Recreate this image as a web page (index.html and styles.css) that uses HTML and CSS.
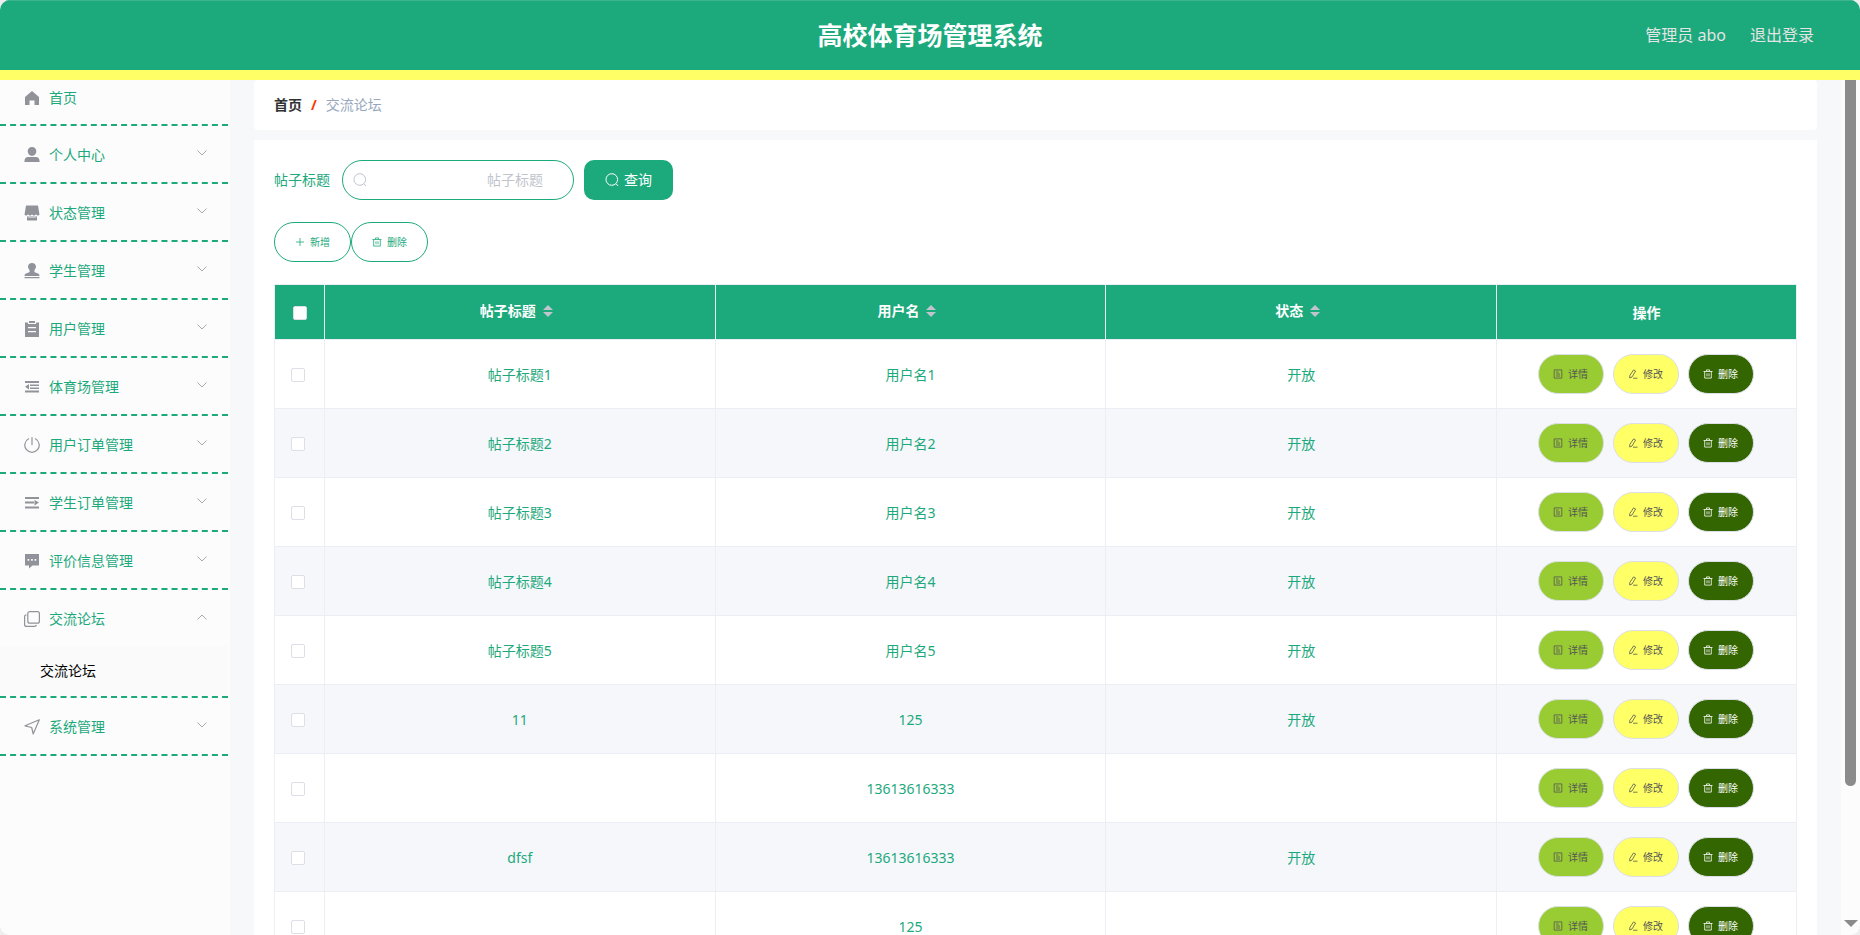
FILE: index.html
```html
<!DOCTYPE html>
<html lang="zh-CN">
<head>
<meta charset="utf-8">
<title>高校体育场管理系统</title>
<link rel="stylesheet" href="styles.css">
</head>
<body>
<svg class="sprite" aria-hidden="true">
  <symbol id="i-home" viewBox="0 0 16 16"><path fill="currentColor" d="M8 1 15 7v8h-4.500v-4.500h-5V15H1V7z"/></symbol>
  <symbol id="i-user" viewBox="0 0 16 16"><path fill="currentColor" d="M8 0c2.600 0 4.300 1.800 4.300 4.300S10.600 9 8 9 3.700 6.800 3.700 4.300 5.400 0 8 0zM4 10h8c2 0 3.500 1.600 3.500 3.500V15H.5v-1.500C.5 11.600 2 10 4 10z"/></symbol>
  <symbol id="i-shop" viewBox="0 0 16 16"><path fill="currentColor" d="M2 .5h12l1.500 9-1.500 1.300-2-1.300-2 1.300-2-1.300-2 1.300-2-1.300-2 1.300L.5 9.500zM3 11.500h1.500V13h7v-1.500H13V15.500H3z"/><path fill="currentColor" opacity=".5" d="M4.500 11h7v2h-7z"/></symbol>
  <symbol id="i-stamp" viewBox="0 0 16 16"><path fill="currentColor" d="M8 0c2.300 0 4 1.700 4 3.800 0 1.700-1.700 2.700-1.700 4.200 0 1 .7 1.500 1.700 1.800 2 .5 3.500 1 3.500 3.200H.5C.5 10.800 2 10.300 4 9.800c1-.3 1.700-.8 1.700-1.800C5.700 6.500 4 5.500 4 3.800 4 1.700 5.700 0 8 0zM.5 14h15v1.300H.5z"/></symbol>
  <symbol id="i-claim" viewBox="0 0 16 16"><path fill="currentColor" fill-rule="evenodd" d="M1 1.500h3V3h8V1.500h3V16H1zM4 6v1.300h8V6zM4 10v1.300h8V10zM5 0h6v2H5z"/></symbol>
  <symbol id="i-fold" viewBox="0 0 16 16"><path fill="currentColor" d="M1 2h14v2H1zM6 5.500h9v1.500H6zM6 8.500h9V10H6zM1 11.500h14v2H1zM1 7.700 5 5v5.500z"/></symbol>
  <symbol id="i-power" viewBox="0 0 16 16"><path fill="none" stroke="currentColor" stroke-width="1.200" stroke-linecap="round" d="M8 .6v7M4.600 1.800a7.200 7.200 0 1 0 6.800 0"/></symbol>
  <symbol id="i-unfold" viewBox="0 0 16 16"><path fill="currentColor" d="M1 2h14v2H1zM1 6.500h9v2H1zM1 11.500h14v2H1zM15 7.500 10.500 5v5.500z"/></symbol>
  <symbol id="i-comment" viewBox="0 0 16 16"><path fill="currentColor" fill-rule="evenodd" d="M1 1h14v11.500H8.500L5 15.500v-3H1zM3.600 6v1.700h1.700V6zM7.100 6v1.700h1.700V6zM10.600 6v1.700h1.700V6z"/></symbol>
  <symbol id="i-copy" viewBox="0 0 16 16"><g fill="none" stroke="currentColor" stroke-width="1.200"><rect x="3.800" y=".6" width="11.600" height="11.600" rx="2"/><path d="M2.500 3.800C1.300 3.800.6 4.500.6 5.800v7.600c0 1.300.8 2 2 2h7.800c1.200 0 1.900-.5 2-1.500"/></g></symbol>
  <symbol id="i-send" viewBox="0 0 16 16"><path fill="none" stroke="currentColor" stroke-width="1.200" stroke-linejoin="round" d="M15.300.8 1 6.800l6.700 1.700L9.200 15z"/></symbol>
  <symbol id="i-down" viewBox="0 0 12 12"><path fill="none" stroke="currentColor" d="M1.500 3.500 6 8l4.500-4.500"/></symbol>
  <symbol id="i-up" viewBox="0 0 12 12"><path fill="none" stroke="currentColor" d="M1.500 8.500 6 4l4.500 4.500"/></symbol>
  <symbol id="i-search" viewBox="0 0 14 14"><g fill="none" stroke="currentColor"><circle cx="6.800" cy="6.500" r="5.800"/><path d="m11 10.800 2.200 2.200"/></g></symbol>
  <symbol id="i-plus" viewBox="0 0 10 10"><path fill="none" stroke="currentColor" stroke-width=".8" d="M5 1v8M1 5h8"/></symbol>
  <symbol id="i-trash" viewBox="0 0 10 10"><path fill="none" stroke="currentColor" stroke-width=".8" d="M.5 2.500h9M3.500 2.200V.9h3v1.300M1.700 2.500v6.600h6.600V2.500M4 4.300v3M6 4.300v3"/></symbol>
  <symbol id="i-doc" viewBox="0 0 10 10"><path fill="none" stroke="currentColor" stroke-width=".8" d="M1.200.9h7.600v8.200H1.200zM3 3h2.500M3 5h4M3 7h4"/></symbol>
  <symbol id="i-edit" viewBox="0 0 10 10"><path fill="none" stroke="currentColor" stroke-width=".8" d="M5.600.9 7.600 2 4 8 1.700 9l.1-2.500zM5 9.200h4.500"/></symbol>
</svg>

<div class="app">
  <header class="topbar">
    <h1 class="topbar-title">高校体育场管理系统</h1>
    <div class="topbar-user"><span>管理员 abo</span><a href="#">退出登录</a></div>
  </header>

  <div class="body">
    <nav class="sidebar">
      <ul class="menu">
        <li class="menu-item menu-first"><a class="menu-link" href="#"><svg class="menu-icon"><use href="#i-home"/></svg>首页</a></li>
        <li class="menu-item"><a class="menu-link" href="#"><svg class="menu-icon"><use href="#i-user"/></svg>个人中心<svg class="menu-arrow"><use href="#i-down"/></svg></a></li>
        <li class="menu-item"><a class="menu-link" href="#"><svg class="menu-icon"><use href="#i-shop"/></svg>状态管理<svg class="menu-arrow"><use href="#i-down"/></svg></a></li>
        <li class="menu-item"><a class="menu-link" href="#"><svg class="menu-icon"><use href="#i-stamp"/></svg>学生管理<svg class="menu-arrow"><use href="#i-down"/></svg></a></li>
        <li class="menu-item"><a class="menu-link" href="#"><svg class="menu-icon"><use href="#i-claim"/></svg>用户管理<svg class="menu-arrow"><use href="#i-down"/></svg></a></li>
        <li class="menu-item"><a class="menu-link" href="#"><svg class="menu-icon"><use href="#i-fold"/></svg>体育场管理<svg class="menu-arrow"><use href="#i-down"/></svg></a></li>
        <li class="menu-item"><a class="menu-link" href="#"><svg class="menu-icon"><use href="#i-power"/></svg>用户订单管理<svg class="menu-arrow"><use href="#i-down"/></svg></a></li>
        <li class="menu-item"><a class="menu-link" href="#"><svg class="menu-icon"><use href="#i-unfold"/></svg>学生订单管理<svg class="menu-arrow"><use href="#i-down"/></svg></a></li>
        <li class="menu-item"><a class="menu-link" href="#"><svg class="menu-icon"><use href="#i-comment"/></svg>评价信息管理<svg class="menu-arrow"><use href="#i-down"/></svg></a></li>
        <li class="menu-item"><a class="menu-link" href="#"><svg class="menu-icon"><use href="#i-copy"/></svg>交流论坛<svg class="menu-arrow"><use href="#i-up"/></svg></a>
          <a class="submenu-link" href="#">交流论坛</a></li>
        <li class="menu-item"><a class="menu-link" href="#"><svg class="menu-icon"><use href="#i-send"/></svg>系统管理<svg class="menu-arrow"><use href="#i-down"/></svg></a></li>
      </ul>
    </nav>

    <main class="main">
      <div class="breadcrumb"><a class="crumb-home" href="#">首页</a><span class="crumb-sep">/</span><span class="crumb-here">交流论坛</span></div>

      <section class="panel">
        <form class="search">
          <label class="search-label" for="title">帖子标题</label>
          <div class="search-box"><svg class="search-icon"><use href="#i-search"/></svg><input class="search-input" id="title" type="text" placeholder="帖子标题"></div>
          <button class="search-btn" type="button"><svg class="btn-search-icon"><use href="#i-search"/></svg>查询</button>
        </form>
        <div class="tools">
          <button class="tool-btn" type="button"><svg class="small-icon"><use href="#i-plus"/></svg>新增</button>
          <button class="tool-btn" type="button"><svg class="small-icon"><use href="#i-trash"/></svg>删除</button>
        </div>

        <table class="table">
          <colgroup><col class="col-check"><col><col><col><col class="col-ops"></colgroup>
          <thead>
            <tr>
              <th class="th-plain"><input class="check" type="checkbox" aria-label="全选"></th>
              <th><span class="th-label">帖子标题<span class="sort"></span></span></th>
              <th><span class="th-label">用户名<span class="sort"></span></span></th>
              <th><span class="th-label">状态<span class="sort"></span></span></th>
              <th class="th-plain">操作</th>
            </tr>
          </thead>
          <tbody>
            <tr><td class="td-check"><input class="check" type="checkbox" aria-label="选择"></td><td>帖子标题1</td><td>用户名1</td><td>开放</td><td><div class="ops"><button class="op op-view" type="button"><svg class="small-icon"><use href="#i-doc"/></svg>详情</button><button class="op op-edit" type="button"><svg class="small-icon"><use href="#i-edit"/></svg>修改</button><button class="op op-del" type="button"><svg class="small-icon"><use href="#i-trash"/></svg>删除</button></div></td></tr>
            <tr><td class="td-check"><input class="check" type="checkbox" aria-label="选择"></td><td>帖子标题2</td><td>用户名2</td><td>开放</td><td><div class="ops"><button class="op op-view" type="button"><svg class="small-icon"><use href="#i-doc"/></svg>详情</button><button class="op op-edit" type="button"><svg class="small-icon"><use href="#i-edit"/></svg>修改</button><button class="op op-del" type="button"><svg class="small-icon"><use href="#i-trash"/></svg>删除</button></div></td></tr>
            <tr><td class="td-check"><input class="check" type="checkbox" aria-label="选择"></td><td>帖子标题3</td><td>用户名3</td><td>开放</td><td><div class="ops"><button class="op op-view" type="button"><svg class="small-icon"><use href="#i-doc"/></svg>详情</button><button class="op op-edit" type="button"><svg class="small-icon"><use href="#i-edit"/></svg>修改</button><button class="op op-del" type="button"><svg class="small-icon"><use href="#i-trash"/></svg>删除</button></div></td></tr>
            <tr><td class="td-check"><input class="check" type="checkbox" aria-label="选择"></td><td>帖子标题4</td><td>用户名4</td><td>开放</td><td><div class="ops"><button class="op op-view" type="button"><svg class="small-icon"><use href="#i-doc"/></svg>详情</button><button class="op op-edit" type="button"><svg class="small-icon"><use href="#i-edit"/></svg>修改</button><button class="op op-del" type="button"><svg class="small-icon"><use href="#i-trash"/></svg>删除</button></div></td></tr>
            <tr><td class="td-check"><input class="check" type="checkbox" aria-label="选择"></td><td>帖子标题5</td><td>用户名5</td><td>开放</td><td><div class="ops"><button class="op op-view" type="button"><svg class="small-icon"><use href="#i-doc"/></svg>详情</button><button class="op op-edit" type="button"><svg class="small-icon"><use href="#i-edit"/></svg>修改</button><button class="op op-del" type="button"><svg class="small-icon"><use href="#i-trash"/></svg>删除</button></div></td></tr>
            <tr><td class="td-check"><input class="check" type="checkbox" aria-label="选择"></td><td>11</td><td>125</td><td>开放</td><td><div class="ops"><button class="op op-view" type="button"><svg class="small-icon"><use href="#i-doc"/></svg>详情</button><button class="op op-edit" type="button"><svg class="small-icon"><use href="#i-edit"/></svg>修改</button><button class="op op-del" type="button"><svg class="small-icon"><use href="#i-trash"/></svg>删除</button></div></td></tr>
            <tr><td class="td-check"><input class="check" type="checkbox" aria-label="选择"></td><td></td><td>13613616333</td><td></td><td><div class="ops"><button class="op op-view" type="button"><svg class="small-icon"><use href="#i-doc"/></svg>详情</button><button class="op op-edit" type="button"><svg class="small-icon"><use href="#i-edit"/></svg>修改</button><button class="op op-del" type="button"><svg class="small-icon"><use href="#i-trash"/></svg>删除</button></div></td></tr>
            <tr><td class="td-check"><input class="check" type="checkbox" aria-label="选择"></td><td>dfsf</td><td>13613616333</td><td>开放</td><td><div class="ops"><button class="op op-view" type="button"><svg class="small-icon"><use href="#i-doc"/></svg>详情</button><button class="op op-edit" type="button"><svg class="small-icon"><use href="#i-edit"/></svg>修改</button><button class="op op-del" type="button"><svg class="small-icon"><use href="#i-trash"/></svg>删除</button></div></td></tr>
            <tr><td class="td-check"><input class="check" type="checkbox" aria-label="选择"></td><td></td><td>125</td><td></td><td><div class="ops"><button class="op op-view" type="button"><svg class="small-icon"><use href="#i-doc"/></svg>详情</button><button class="op op-edit" type="button"><svg class="small-icon"><use href="#i-edit"/></svg>修改</button><button class="op op-del" type="button"><svg class="small-icon"><use href="#i-trash"/></svg>删除</button></div></td></tr>
          </tbody>
        </table>
      </section>
    </main>

    <div class="scrollbar" aria-hidden="true"><div class="scroll-thumb"></div><div class="scroll-down"></div></div>
  </div>
</div>
</body>
</html>
```

FILE: styles.css
```css
:root {
  --green: #1ca97c;
  --line: #ebeef5;
}

* { box-sizing: border-box; }

body {
  margin: 0;
  background: #eee;
  font: 14px/20px "Noto Sans", "Noto Sans CJK SC", sans-serif;
  color: var(--green);
}

a { color: inherit; text-decoration: none; }

button, input { font: inherit; margin: 0; }

svg { flex: none; display: block; }

.sprite { position: absolute; width: 0; height: 0; }

.app {
  display: flex;
  flex-direction: column;
  height: 100vh;
  overflow: hidden;
  border-radius: 10px;
  background: #f7f8fa;
}

/* Header */
.topbar {
  flex: none;
  display: grid;
  grid-template-columns: 1fr auto 1fr;
  align-items: center;
  height: 80px;
  padding: 0 46px 2px;
  background: var(--green);
  border-top: 1px solid #3bb48d;
  border-bottom: 10px solid #ff6;
}

.topbar-title {
  grid-column: 2;
  margin: 0;
  font-size: 25px;
  line-height: 36px;
  font-weight: 700;
  color: #fff;
}

.topbar-user {
  display: flex;
  justify-content: flex-end;
  gap: 24px;
  font-size: 16px;
  line-height: 24px;
  color: #e4e4e4;
}

.body { flex: 1; display: flex; min-height: 0; }

/* Sidebar */
.sidebar {
  flex: none;
  width: 230px;
  padding-right: 2px;
  background: #fcfcfc;
}

.menu { margin: 0; padding: 0; list-style: none; }

.menu-item { border-bottom: 2px dashed var(--green); }

.menu-link {
  display: flex;
  align-items: center;
  height: 56px;
  padding: 2px 20px 0 24px;
}

.menu-first .menu-link { height: 44px; padding-top: 0; padding-bottom: 8px; }

.menu-icon { width: 16px; height: 16px; margin-right: 9px; color: #909399; }

.menu-arrow { width: 12px; height: 12px; margin: 0 0 4px auto; color: #aaa; }

.submenu-link {
  display: block;
  padding-left: 40px;
  line-height: 50px;
  background: #fafafa;
  color: #000;
}

/* Content */
.main {
  flex: 1;
  min-width: 0;
  display: flex;
  flex-direction: column;
  gap: 10px;
  padding: 0 24px;
}

.breadcrumb {
  flex: none;
  display: flex;
  gap: 9px;
  align-items: center;
  height: 50px;
  padding: 0 20px;
  background: #fff;
  border-radius: 4px;
}

.crumb-home { font-weight: 700; color: #303133; }
.crumb-sep { font-weight: 700; color: #f30; }
.crumb-here { color: #97a8be; }

.panel { flex: none; padding: 20px; background: #fff; }

.search { display: flex; align-items: center; }

.search-label { margin-right: 12px; }

.search-box { display: flex; align-items: center; width: 232px; margin-right: 10px; border: 1px solid var(--green); border-radius: 20px; padding: 0 30px 0 10px; }

.search-icon { width: 14px; height: 14px; color: #c0c4cc; }

.search-input {
  flex: 1;
  min-width: 0;
  height: 38px;
  padding: 0 0 2px;
  border: 0;
  outline: 0;
  background: none;
  text-align: right;
}

.search-input::placeholder { color: #c0c4cc; }

.search-btn {
  display: flex;
  align-items: center;
  justify-content: center;
  gap: 5px;
  height: 40px;
  padding: 0 21px;
  border: 0;
  border-radius: 10px;
  background: var(--green);
  color: #fff;
}

.btn-search-icon { width: 14px; height: 14px; }

.tools { display: flex; margin: 22px 0; }

.tool-btn,
.op {
  display: flex;
  align-items: center;
  justify-content: center;
  gap: 5px;
  height: 40px;
  border-radius: 20px;
  font-size: 10px;
}

.tool-btn { padding: 0 20px; border: 1px solid var(--green); background: #fff; color: var(--green); }

.small-icon { width: 10px; height: 10px; }

/* Table */
.table {
  width: 100%;
  table-layout: fixed;
  border-collapse: separate;
  border-spacing: 0;
  border: 1px solid var(--line);
  border-width: 1px 0 0 1px;
}

.col-check { width: 50px; }
.col-ops { width: 300px; }

.table th,
.table td {
  padding: 0;
  border: 1px solid var(--line);
  border-width: 0 1px 1px 0;
  text-align: center;
  vertical-align: middle;
}

.table th { height: 55px; padding-bottom: 2px; background: var(--green); color: #fff; font-weight: 700; }
.table .th-plain { padding: 2px 0 0; }
.table td { height: 69px; padding-top: 2px; }
.table td:last-child { padding: 0 2px 0 0; }
.table tbody tr:nth-child(even) { background: #f5f7fb; }
.table .td-check { padding-right: 4px; }

.th-label { display: inline-flex; align-items: center; }

.sort {
  display: flex;
  flex-direction: column;
  align-items: center;
  gap: 2px;
  width: 24px;
}

.sort::before,
.sort::after { content: ""; border: 5px solid transparent; }
.sort::before { border-top: 0; border-bottom-color: #c0c4cc; }
.sort::after { border-bottom: 0; border-top-color: #c0c4cc; }

.check {
  display: block;
  appearance: none;
  width: 14px;
  height: 14px;
  margin: 0 auto;
  border: 1px solid #dcdfe6;
  border-radius: 2px;
  background: #fff;
}

.ops { display: flex; justify-content: center; gap: 9px; }

.op { width: 66px; padding: 0; border: 1px solid #dcdfe6; }
.op-view { background: #9c3; color: #555; }
.op-edit { background: #ff6; color: #555; }
.op-del { background: #360; color: #fff; }

/* Scroll track beside the content */
.scrollbar {
  flex: none;
  display: flex;
  flex-direction: column;
  justify-content: space-between;
  align-items: center;
  width: 19px;
  padding-bottom: 8px;
  background: #fcfcfc;
}

.scroll-thumb { width: 11px; height: 706px; max-height: 84%; border-radius: 0 0 6px 6px; background: #8b8b8b; }

.scroll-down { border: 7px solid transparent; border-top-color: #8b8b8b; border-bottom: 0; }
```
